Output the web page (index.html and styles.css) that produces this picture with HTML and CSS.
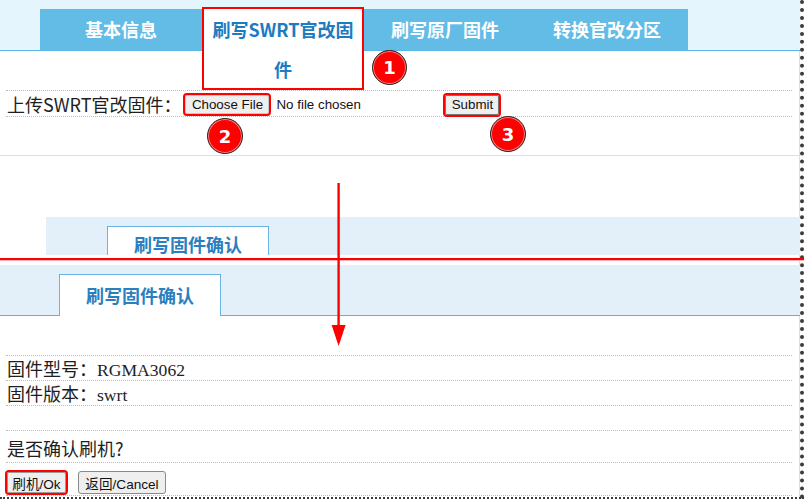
FILE: index.html
```html
<!DOCTYPE html>
<html lang="zh-CN">
<head>
<meta charset="utf-8">
<title>刷写SWRT官改固件</title>
<link rel="stylesheet" href="styles.css">
</head>
<body>
<div class="frame">
  <section class="shot shot-top">
    <nav class="tabs">
      <div class="tab">基本信息</div>
      <div class="tab active">刷写SWRT官改固件</div>
      <div class="tab">刷写原厂固件</div>
      <div class="tab">转换官改分区</div>
    </nav>
    <div class="rows rows-upload">
      <div class="row row-upload">
        <span class="label">上传SWRT官改固件：</span>
        <span class="file">
          <button class="btn btn-choose mark" type="button">Choose File</button>
          <span class="file-name">No file chosen</span>
        </span>
        <button class="btn btn-submit mark" type="button">Submit</button>
      </div>
    </div>
    <span class="badge b1">1</span>
    <span class="badge b2">2</span>
    <span class="badge b3">3</span>
  </section>

  <section class="shot shot-mid">
    <div class="subtab subtab-mid">刷写固件确认</div>
  </section>

  <div class="divider"></div>

  <section class="shot shot-bottom">
    <div class="subtabs">
      <div class="subtab">刷写固件确认</div>
    </div>
    <div class="rows rows-confirm">
      <div class="row row-text">固件型号：<span class="val">RGMA3062</span></div>
      <div class="row row-text">固件版本：<span class="val">swrt</span></div>
      <div class="row row-text"></div>
      <div class="row row-text row-question">是否确认刷机?</div>
      <div class="row row-buttons">
        <button class="btn btn-ok mark" type="button">刷机/Ok</button>
        <button class="btn btn-cancel" type="button">返回/Cancel</button>
      </div>
    </div>
  </section>

  <svg class="arrow" width="15" height="164" viewBox="0 0 15 164">
    <line x1="7.6" y1="0" x2="7.6" y2="144" stroke="#ff0000" stroke-width="2.4"/>
    <polygon points="0.6,142 14.6,142 7.6,163" fill="#ff0000"/>
  </svg>
</div>
</body>
</html>
```

FILE: styles.css
```css
html, body {
  margin: 0;
  padding: 0;
  background: #ffffff;
}

body {
  font-family: "Noto Sans CJK SC", "Noto Sans", sans-serif;
  color: #1e1e1e;
}

.frame {
  position: relative;
  width: 800px;
  height: 497px;
  border-right: 4px dotted #3c3c3c;
  border-bottom: 2px dotted #3c3c3c;
  box-shadow: inset -1px 0 0 #c9e5f2;
}

/* ---------- top shot ---------- */
.shot-top {
  position: relative;
  padding-bottom: 38px;
  border-bottom: 1px solid #c5e6f3;
}

.tabs {
  display: flex;
  height: 41px;
  padding: 9px 0 0 40px;
  background: #e5f5fd;
  border-bottom: 1px solid #5bb7e5;
}

.tab {
  flex: none;
  width: 162px;
  height: 41px;
  box-sizing: border-box;
  background: #62bce6;
  color: #ffffff;
  font-weight: 700;
  font-size: 18px;
  line-height: 41px;
  text-align: center;
}

.tab.active {
  position: relative;
  z-index: 1;
  height: 81px;
  padding: 0 6px;
  background: #ffffff;
  color: #1c7cbf;
  line-height: 40px;
}

.tab.active::after {
  content: "";
  position: absolute;
  left: 0;
  right: 0;
  top: -2px;
  bottom: 0;
  border: 2px solid #ff0000;
}

.rows {
  margin: 0 8px 0 6px;
}

.row {
  border-top: 1px dotted #bdbdbd;
}

.rows > .row:last-child {
  border-bottom: 1px dotted #bdbdbd;
}

.rows-upload {
  margin-top: 39px;
}

.row-upload {
  display: flex;
  align-items: center;
  height: 23px;
  padding-top: 2px;
}

.label {
  padding-left: 1px;
  font-size: 18px;
  line-height: 23px;
}

.file {
  display: flex;
  align-items: center;
  width: 260px;
  margin-left: 4px;
}

.btn {
  box-sizing: border-box;
  padding: 0;
  font-family: "Liberation Sans", "Noto Sans CJK SC", sans-serif;
  font-size: 13.33px;
  color: #111111;
  background: #efefef;
  border: 1px solid #9a9a9a;
  border-radius: 2px;
}

.mark {
  outline: 2px solid #ff0000;
}

.btn-choose {
  width: 84px;
  height: 19px;
  border-color: #c8c8c8;
}

.file-name {
  margin-left: 7px;
  font-family: "Liberation Sans", sans-serif;
  font-size: 13.33px;
  color: #111111;
}

.btn-submit {
  width: 54px;
  height: 20px;
  border-color: #777777;
}

.badge {
  position: absolute;
  display: flex;
  align-items: center;
  justify-content: center;
  box-sizing: border-box;
  width: 36px;
  height: 36px;
  border-radius: 50%;
  background: #ff0000;
  border: 1.5px solid #2a2a2a;
  box-shadow: inset 0 0 0 1px #ff8080;
  color: #ffffff;
  font-family: "DejaVu Sans", sans-serif;
  font-weight: 700;
  font-size: 18px;
}

.b1 { left: 372px; top: 50px; width: 35px; height: 35px; }
.b2 { left: 207px; top: 118px; }
.b3 { left: 490px; top: 116px; }

/* ---------- middle shot ---------- */
.shot-mid {
  height: 38px;
  box-sizing: border-box;
  margin: 61px 0 0 46px;
  padding-top: 9px;
  background: #e3f0fa;
}

.subtab {
  width: 162px;
  height: 42px;
  box-sizing: border-box;
  margin-left: 61px;
  background: #ffffff;
  border: 1px solid #6ab4e0;
  border-bottom: none;
  color: #2a7fc0;
  font-weight: 700;
  font-size: 18px;
  line-height: 40px;
  text-align: center;
}

.subtab-mid {
  height: 29px;
  padding-top: 8px;
  line-height: 19px;
}

.divider {
  height: 2px;
  margin: 3px -4px 5px 0;
  background: #ff0000;
  box-shadow: 0 1px 0 #ffb3b3;
}

/* ---------- bottom shot ---------- */
.subtabs {
  height: 41px;
  padding: 9px 0 0 59px;
  background: #e3f0fa;
  border-bottom: 1px solid #6aaedd;
}

.subtabs .subtab {
  margin-left: 0;
}

.rows-confirm {
  margin-top: 39px;
}

.row-text {
  height: 24px;
  padding-left: 1px;
  font-size: 18px;
  line-height: 24px;
}

.val {
  font-family: "Liberation Serif", serif;
  font-size: 17.6px;
}

.row-question {
  height: 26px;
  padding-top: 5px;
}

.row-buttons {
  display: flex;
  align-items: center;
  height: 25px;
  padding-top: 7px;
}

.btn-ok {
  width: 59px;
  height: 21px;
  margin-left: 1px;
  font-size: 13.6px;
}

.btn-cancel {
  width: 88px;
  height: 23px;
  margin-left: 12px;
  border-color: #8a8a8a;
  border-radius: 3px;
  font-size: 13.6px;
}

.arrow {
  position: absolute;
  left: 331px;
  top: 183px;
}
```
